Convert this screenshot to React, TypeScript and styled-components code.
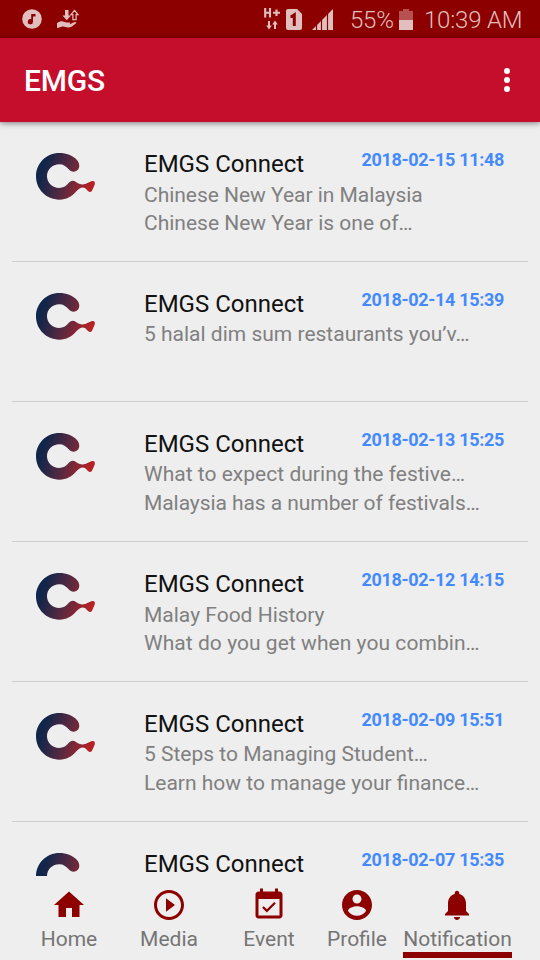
import React from "react";
import styled, { createGlobalStyle } from "styled-components";

const GlobalStyle = createGlobalStyle`
  * { box-sizing: border-box; }
  body {
    margin: 0;
    background: #eeeeee;
    font-family: Roboto, "Liberation Sans", sans-serif;
  }
`;

const Screen = styled.div`
  width: 540px;
  height: 960px;
  display: flex;
  flex-direction: column;
  background: #eeeeee;
  overflow: hidden;
`;

const StatusBar = styled.div`
  flex: none;
  height: 38px;
  display: flex;
  align-items: center;
  justify-content: space-between;
  padding: 0 17px 0 22px;
  background: #8c0000;
  color: #e2bfbf;
`;

const StatusGroup = styled.div<{ $gap: number }>`
  display: flex;
  align-items: center;
  gap: ${(p) => p.$gap}px;
`;

const StatusText = styled.span<{ $width: number }>`
  width: ${(p) => p.$width}px;
  font-size: 24px;
  line-height: 28px;
  font-weight: 300;
  letter-spacing: -0.2px;
  white-space: nowrap;
  padding-top: 1px;
`;

const AppBar = styled.header`
  flex: none;
  height: 84px;
  display: flex;
  align-items: center;
  justify-content: space-between;
  padding: 0 30px 0 24px;
  background: #c40e2c;
  box-shadow: 0 1px 6px rgba(0, 0, 0, 0.5);
  z-index: 1;
`;

const AppTitle = styled.h1`
  margin: 2px 0 0;
  color: #fff;
  font-size: 30px;
  line-height: 36px;
  font-weight: 500;
  letter-spacing: -0.2px;
`;

const List = styled.main`
  flex: none;
  height: 754px;
  padding: 0 12px;
  overflow: hidden;
`;

const Row = styled.article`
  height: 140px;
  display: grid;
  grid-template-columns: 108px 1fr auto;
  padding: 27px 24px 0;
  border-bottom: 1px solid #cccccc;
`;

const Logo = styled.svg`
  width: 60px;
  height: 48px;
  margin-top: 3px;
`;

const Message = styled.div`
  min-width: 0;
  white-space: nowrap;
`;

const Sender = styled.h2`
  margin: 3px 0 0;
  color: #111;
  font-size: 24px;
  line-height: 24px;
  font-weight: 400;
`;

const Preview = styled.div<{ $raised: boolean }>`
  display: flex;
  flex-direction: column;
  gap: ${(p) => (p.$raised ? 1 : 0)}px;
  margin-top: ${(p) => (p.$raised ? 4 : 5)}px;
  width: 0;
  color: #808080;
  font-size: 21px;
  line-height: 28px;
`;

const PreviewLine = styled.span<{ $tracking?: number }>`
  letter-spacing: ${(p) => p.$tracking ?? 0}px;
`;

const Stamp = styled.time`
  color: #448aff;
  font-size: 18px;
  line-height: 21px;
  font-weight: 700;
  letter-spacing: -0.32px;
  white-space: nowrap;
`;

const Nav = styled.nav`
  flex: none;
  height: 84px;
  display: grid;
  grid-template-columns: 100px 100px 100px 76px 125px;
  padding: 11px 0 0 19px;
`;

const Tab = styled.a<{ $active?: boolean }>`
  justify-self: center;
  height: 71px;
  display: flex;
  flex-direction: column;
  align-items: center;
  color: #757575;
  font-size: 21px;
  line-height: 26px;
  border-bottom: 6px solid ${(p) => (p.$active ? "#8c0000" : "transparent")};
`;

const TabIcon = styled.svg`
  width: 36px;
  height: 36px;
  margin-bottom: 3px;
  fill: #8c0000;
`;

const tabs = [
  { label: "Home", path: "M10 20v-6h4v6h5v-8h3L12 3 2 12h3v8z" },
  {
    label: "Media",
    path: "M10 16.5l6-4.5-6-4.5v9zM12 2C6.48 2 2 6.48 2 12s4.48 10 10 10 10-4.48 10-10S17.52 2 12 2zm0 18c-4.41 0-8-3.59-8-8s3.59-8 8-8 8 3.59 8 8-3.59 8-8 8z",
  },
  {
    label: "Event",
    path: "M16.53 11.06L15.47 10l-4.88 4.88-2.12-2.12-1.06 1.06L10.59 17l5.94-5.94zM19 3h-1V1h-2v2H8V1H6v2H5c-1.11 0-1.99.9-1.99 2L3 19c0 1.1.89 2 2 2h14c1.1 0 2-.9 2-2V5c0-1.1-.9-2-2-2zm0 16H5V8h14v11z",
  },
  {
    label: "Profile",
    path: "M12 2C6.48 2 2 6.48 2 12s4.48 10 10 10 10-4.48 10-10S17.52 2 12 2zm0 3c1.66 0 3 1.34 3 3s-1.34 3-3 3-3-1.34-3-3 1.34-3 3-3zm0 14.2c-2.5 0-4.71-1.28-6-3.22.03-1.99 4-3.08 6-3.08 1.99 0 5.97 1.09 6 3.08-1.29 1.94-3.5 3.22-6 3.22z",
  },
  {
    label: "Notification",
    active: true,
    path: "M12 22c1.1 0 2-.9 2-2h-4c0 1.1.89 2 2 2zm6-6v-5c0-3.07-1.64-5.64-4.5-6.32V4c0-.83-.67-1.5-1.5-1.5s-1.5.67-1.5 1.5v.68C7.63 5.36 6 7.92 6 11v5l-2 2v1h16v-1l-2-2z",
  },
];

type Notice = {
  time: string;
  lines: { text: string; tracking?: number }[];
  raised: boolean;
};

const notices: Notice[] = [
  {
    time: "2018-02-15 11:48",
    lines: [{ text: "Chinese New Year in Malaysia", tracking: -0.03 }, { text: "Chinese New Year is one of…" }],
    raised: false,
  },
  { time: "2018-02-14 15:39", lines: [{ text: "5 halal dim sum restaurants you’v…" }], raised: true },
  {
    time: "2018-02-13 15:25",
    lines: [
      { text: "What to expect during the festive…", tracking: 0.02 },
      { text: "Malaysia has a number of festivals…", tracking: -0.07 },
    ],
    raised: true,
  },
  {
    time: "2018-02-12 14:15",
    lines: [{ text: "Malay Food History" }, { text: "What do you get when you combin…", tracking: 0.05 }],
    raised: false,
  },
  {
    time: "2018-02-09 15:51",
    lines: [{ text: "5 Steps to Managing Student…" }, { text: "Learn how to manage your finance…" }],
    raised: true,
  },
  { time: "2018-02-07 15:35", lines: [], raised: false },
];

function ConnectLogo({ id }: { id: string }) {
  return (
    <Logo viewBox="48 36 180 144">
      <defs>
        <linearGradient id={id} gradientUnits="userSpaceOnUse" x1="68" y1="90" x2="215" y2="135">
          <stop offset="0" stopColor="#10264a" />
          <stop offset="0.55" stopColor="#64293d" />
          <stop offset="1" stopColor="#b82225" />
        </linearGradient>
      </defs>
      <path
        fill={`url(#${id})`}
        d="M171 60C158 46 139 39 118 39C79 39 48 70 48 109C48 148 79 179 118 179C140 179 154 170 167 156C176 146 186 139 195 144L204 153Q211 159 216 152L224 134Q227 121 216 123L202 129C189 137 177 132 168 126C160 120 151 122 145 130C138 139 129 144 118 144C97 144 81 128 81 109C81 88 97 73 118 73C130 73 138 79 146 88C152 95 164 98 172 91C181 83 179 69 171 60Z"
      />
    </Logo>
  );
}

function MusicIcon() {
  return (
    <svg width="20" height="20" viewBox="0 0 20 20">
      <circle cx="10" cy="10" r="9.8" fill="#e2bfbf" />
      <path d="M9.200 5h4.300v2.600h-2.500v5.200a2.600 2.600 0 1 1-1.800-2.500z" fill="#8c0000" />
    </svg>
  );
}

function TransferIcon() {
  return (
    <svg width="23" height="20" viewBox="0 0 23 20" fill="#e2bfbf">
      <path d="M8 1h3.500v5.500H14L9.750 11.200 5.500 6.500H8z" />
      <path d="M17.500 1.500l3.600 4.200h-2v5h-3.200v-5h-2z" fill="none" stroke="#e2bfbf" strokeWidth="1.200" />
      <path d="M0 14.200C3 12 5 11.800 7.500 13c2 .9 3.500 0 5.200.6.700.5.400 1.300-.4 1.600 2.500-.2 3.500-2 6-2.200 1.200 0 1.300.8.500 1.400-2.300 1.800-4 3.700-6.800 4.100-3 .3-5-1.700-8-.5L0 19z" />
    </svg>
  );
}

const DataIcon = () => (
  <svg width="16" height="22" viewBox="0 0 16 22" fill="none" stroke="#e2bfbf">
    <path d="M1.200 0v9.500M6 0v9.500M1 4.700h5M9 4.700h7M12.500 1.500v6.400" strokeWidth="2.100" />
    <path d="M5 13v6M11 21v-6" strokeWidth="2" />
    <path d="M2.200 17.500h5.600L5 21.500zM8.200 16.500h5.600L11 12.500z" fill="#e2bfbf" stroke="none" />
  </svg>
);

const SimIcon = () => (
  <svg width="16" height="21" viewBox="0 0 16 21">
    <path d="M2 0h9l5 5v14a2 2 0 0 1-2 2H2a2 2 0 0 1-2-2V2a2 2 0 0 1 2-2z" fill="#e2bfbf" />
    <path d="M4.500 7.500h1.200L8.300 5.800V17" fill="none" stroke="#8c0000" strokeWidth="3" />
  </svg>
);

const SignalIcon = () => (
  <svg width="21" height="21" viewBox="0 0 21 21" fill="#e2bfbf">
    <path d="M0 21L21 0v21z" />
    <path d="M4.500 12v9M9.500 8v13M15.500 3v18" stroke="#8c0000" strokeWidth="1.200" />
  </svg>
);

const BatteryIcon = () => (
  <svg width="14" height="21" viewBox="0 0 14 21">
    <path d="M0 2h4V0h6v2h4v9H0z" fill="#b75050" />
    <path d="M0 11h14v10H0z" fill="#e2bfbf" />
  </svg>
);

export default function App() {
  return (
    <>
      <GlobalStyle />
      <Screen>
        <StatusBar>
          <StatusGroup $gap={15}>
            <MusicIcon />
            <TransferIcon />
          </StatusGroup>
          <StatusGroup $gap={11}>
            <StatusGroup $gap={17}>
              <StatusGroup $gap={10}>
                <StatusGroup $gap={6}>
                  <DataIcon />
                  <SimIcon />
                </StatusGroup>
                <SignalIcon />
              </StatusGroup>
              <StatusGroup $gap={6}>
                <StatusText $width={43}>55%</StatusText>
                <BatteryIcon />
              </StatusGroup>
            </StatusGroup>
            <StatusText $width={99}>10:39 AM</StatusText>
          </StatusGroup>
        </StatusBar>
        <AppBar>
          <AppTitle>EMGS</AppTitle>
          <svg width="6" height="24" viewBox="0 0 6 24" fill="#fff">
            <circle cx="3" cy="3" r="3" />
            <circle cx="3" cy="12" r="3" />
            <circle cx="3" cy="21" r="3" />
          </svg>
        </AppBar>
        <List>
          {notices.map((n, i) => (
            <Row key={n.time}>
              <ConnectLogo id={`connect-${i}`} />
              <Message>
                <Sender>EMGS Connect</Sender>
                <Preview $raised={n.raised}>
                  {n.lines.map((line) => (
                    <PreviewLine key={line.text} $tracking={line.tracking}>
                      {line.text}
                    </PreviewLine>
                  ))}
                </Preview>
              </Message>
              <Stamp>{n.time}</Stamp>
            </Row>
          ))}
        </List>
        <Nav>
          {tabs.map((t) => (
            <Tab key={t.label} $active={t.active}>
              <TabIcon viewBox="0 0 24 24">
                <path d={t.path} />
              </TabIcon>
              {t.label}
            </Tab>
          ))}
        </Nav>
      </Screen>
    </>
  );
}
